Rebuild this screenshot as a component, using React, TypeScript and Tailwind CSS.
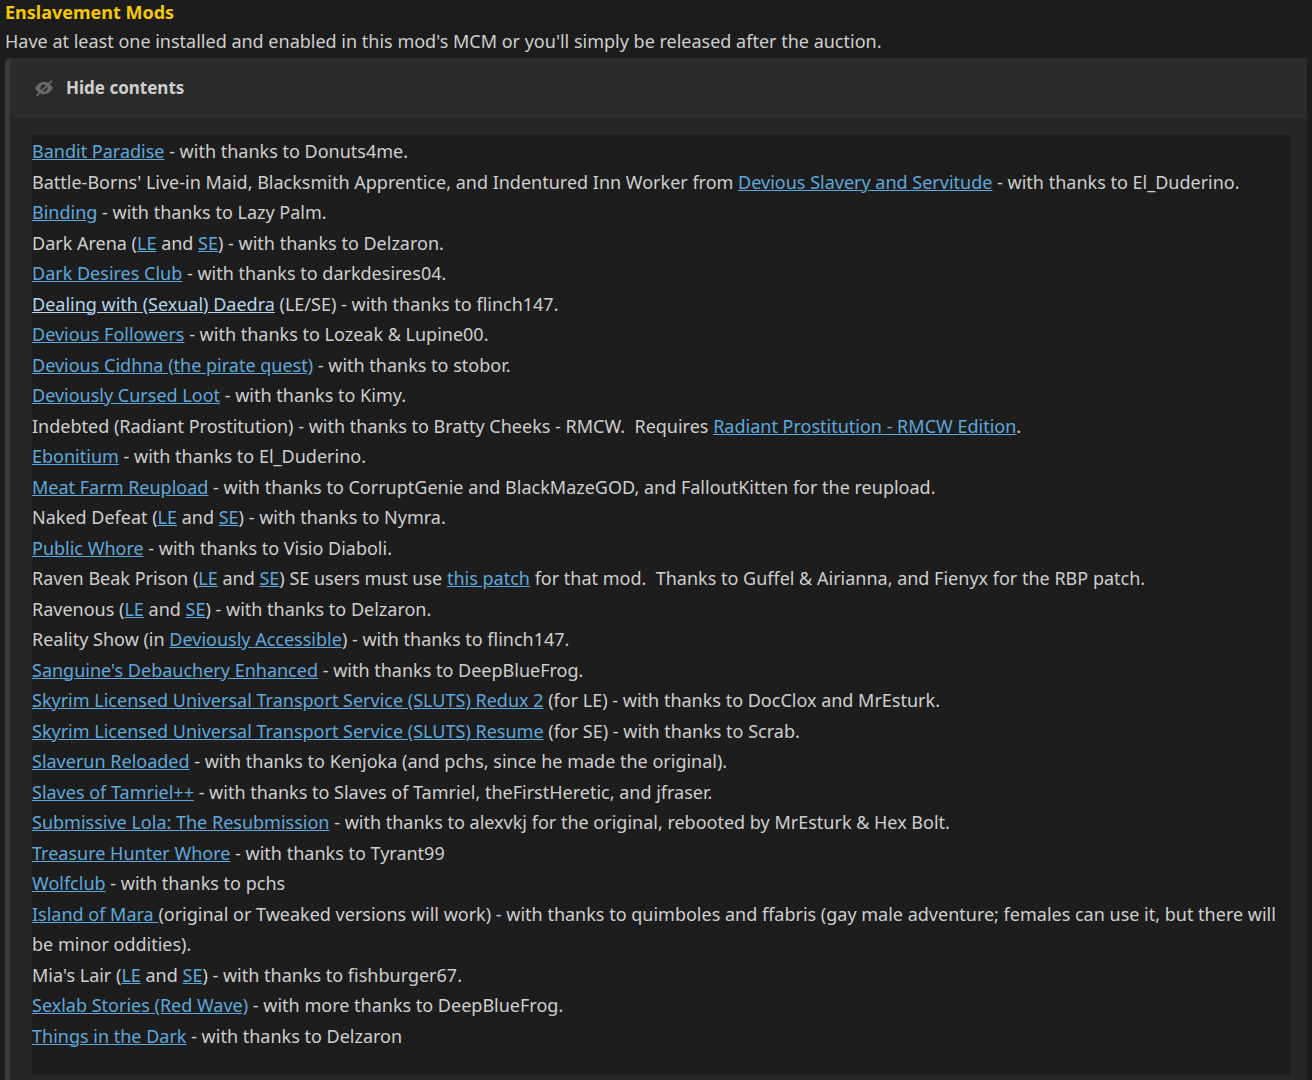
const A = ({ children, light }: { children: React.ReactNode; light?: boolean }) => (
  <a href="#" className={light ? "underline text-[#b4d6f0]" : "underline text-[#5fa8dc]"}>
    {children}
  </a>
);

export default function App() {
  return (
    <div className="min-h-screen bg-[#1c1c1c] text-[#cfcfcf] text-[18px] leading-[30.5px] font-['Open_Sans','Noto_Sans',sans-serif] pl-[5px] pr-[5px]">
      <div className="font-bold text-[#f5c800] leading-[24px]">Enslavement Mods</div>
      <div className="leading-[34px]">
        Have at least one installed and enabled in this mod's MCM or you'll simply be released after the auction.
      </div>
      <div className="bg-[#262626] border-l-[5px] border-[#3a3a3a] rounded-tl-md">
        <div className="h-[60px] bg-[#2b2b2b] flex items-center gap-[10px] pl-[22px] font-bold text-[#cfcfcf] text-[17px]">
          <svg width="24" height="18" viewBox="0 0 24 20" fill="#6a6a6a">
            <path d="M12 3C6 3 2 10 2 10s4 7 10 7 10-7 10-7-4-7-10-7zm0 11a4 4 0 1 1 0-8 4 4 0 0 1 0 8z" />
            <path d="M3 18L20 1l1.5 1.5L4.5 19.5z" />
          </svg>
          Hide contents
        </div>
        <div className="pt-[17px] pb-[5px] pl-[22px] pr-[17px]">
          <div className="bg-[#1d1d1d] pt-[1px] pb-[24px] pr-[10px]">
            <p><A>Bandit Paradise</A> - with thanks to Donuts4me.</p>
            <p>Battle-Borns' Live-in Maid, Blacksmith Apprentice, and Indentured Inn Worker from <A>Devious Slavery and Servitude</A> - with thanks to El_Duderino.</p>
            <p><A>Binding</A> - with thanks to Lazy Palm.</p>
            <p>Dark Arena (<A>LE</A> and <A>SE</A>) - with thanks to Delzaron.</p>
            <p><A>Dark Desires Club</A> - with thanks to darkdesires04.</p>
            <p><A light>Dealing with (Sexual) Daedra</A> (LE/SE) - with thanks to flinch147.</p>
            <p><A>Devious Followers</A> - with thanks to Lozeak &amp; Lupine00.</p>
            <p><A>Devious Cidhna (the pirate quest)</A> - with thanks to stobor.</p>
            <p><A>Deviously Cursed Loot</A> - with thanks to Kimy.</p>
            <p>Indebted (Radiant Prostitution) - with thanks to Bratty Cheeks - RMCW.&nbsp; Requires <A>Radiant Prostitution - RMCW Edition</A>.</p>
            <p><A>Ebonitium</A> - with thanks to El_Duderino.</p>
            <p><A>Meat Farm Reupload</A> - with thanks to CorruptGenie and BlackMazeGOD, and FalloutKitten for the reupload.</p>
            <p>Naked Defeat (<A>LE</A> and <A>SE</A>) - with thanks to Nymra.</p>
            <p><A>Public Whore</A> - with thanks to Visio Diaboli.</p>
            <p>Raven Beak Prison (<A>LE</A> and <A>SE</A>) SE users must use <A>this patch</A> for that mod.&nbsp; Thanks to Guffel &amp; Airianna, and Fienyx for the RBP patch.</p>
            <p>Ravenous (<A>LE</A> and <A>SE</A>) - with thanks to Delzaron.</p>
            <p>Reality Show (in <A>Deviously Accessible</A>) - with thanks to flinch147.</p>
            <p><A>Sanguine's Debauchery Enhanced</A> - with thanks to DeepBlueFrog.</p>
            <p><A>Skyrim Licensed Universal Transport Service (SLUTS) Redux 2</A> (for LE) - with thanks to DocClox and MrEsturk.</p>
            <p><A>Skyrim Licensed Universal Transport Service (SLUTS) Resume</A> (for SE) - with thanks to Scrab.</p>
            <p><A>Slaverun Reloaded</A> - with thanks to Kenjoka (and pchs, since he made the original).</p>
            <p><A>Slaves of Tamriel++</A> - with thanks to Slaves of Tamriel, theFirstHeretic, and jfraser.</p>
            <p><A>Submissive Lola: The Resubmission</A> - with thanks to alexvkj for the original, rebooted by MrEsturk &amp; Hex Bolt.</p>
            <p><A>Treasure Hunter Whore</A> - with thanks to Tyrant99</p>
            <p><A>Wolfclub</A> - with thanks to pchs</p>
            <p><A>Island of Mara </A>(original or Tweaked versions will work) - with thanks to quimboles and ffabris (gay male adventure; females can use it, but there will be minor oddities).</p>
            <p>Mia's Lair (<A>LE</A> and <A>SE</A>) - with thanks to fishburger67.</p>
            <p><A>Sexlab Stories (Red Wave)</A> - with more thanks to DeepBlueFrog.</p>
            <p><A>Things in the Dark</A> - with thanks to Delzaron</p>
          </div>
        </div>
      </div>
    </div>
  );
}
